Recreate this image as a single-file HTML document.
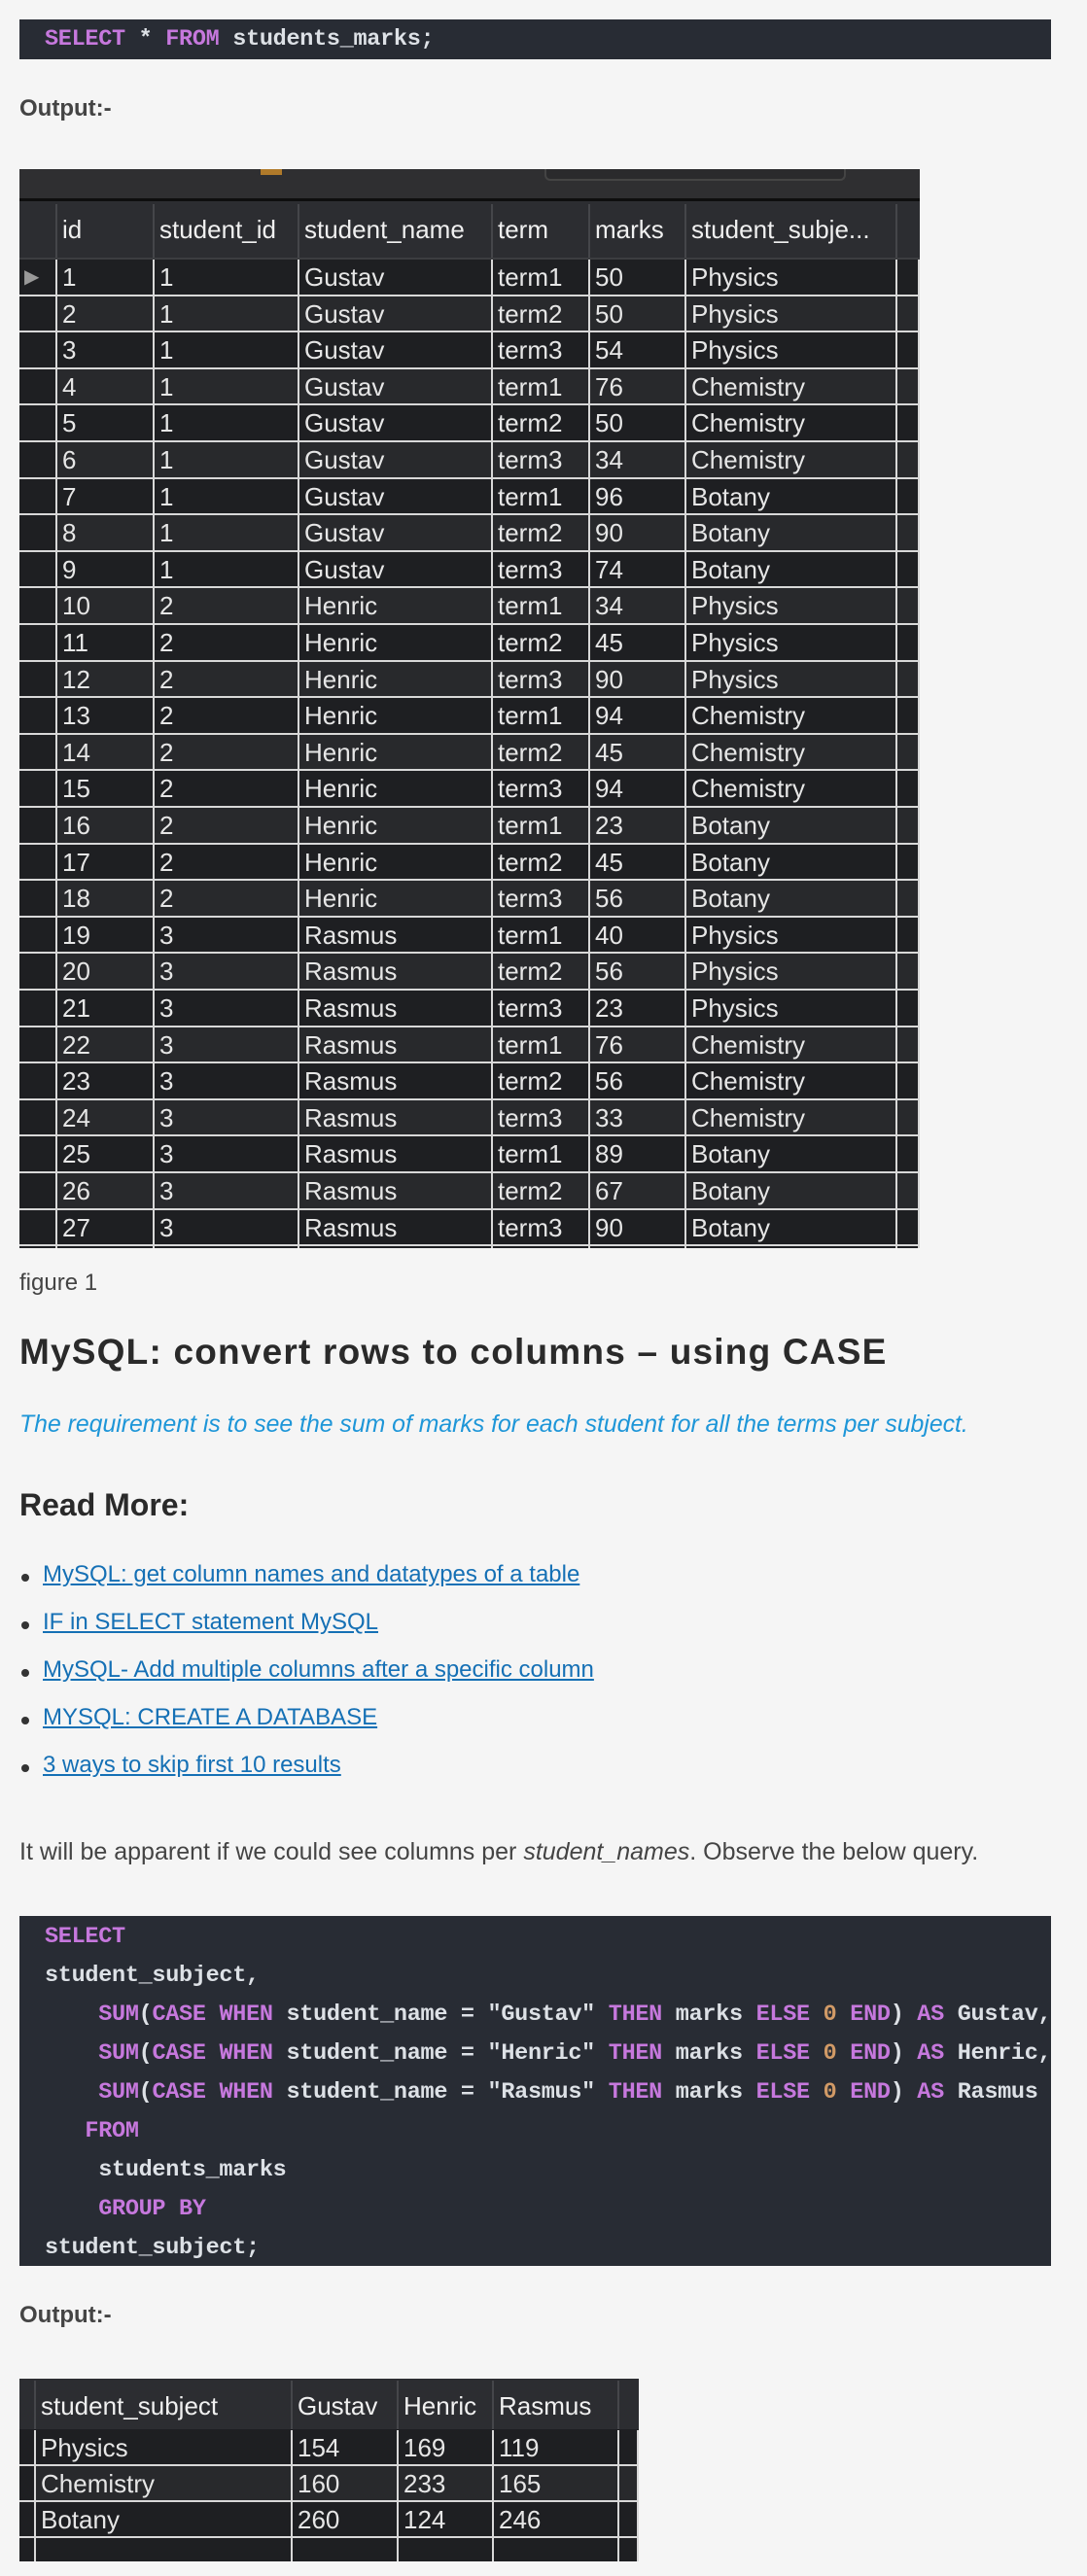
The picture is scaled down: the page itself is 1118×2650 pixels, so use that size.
<!DOCTYPE html>
<html><head><meta charset="utf-8">
<style>
*{margin:0;padding:0;box-sizing:border-box}
body{width:1118px;height:2650px;background:#f5f5f5;position:relative;font-family:"Liberation Sans",sans-serif;color:#3a3a3a;overflow:hidden}
.abs{position:absolute}
.code{position:absolute;left:20px;width:1061px;background:#282c34;font-family:"Liberation Mono",monospace;font-size:23.5px;color:#dde1e6;white-space:pre;padding-left:26px;font-weight:bold;letter-spacing:-0.3px}
.k{color:#c678dd}.n{color:#d19a66}
.tbl{position:absolute;background:#1e1f22;font-family:"Liberation Sans",sans-serif;color:#e6e6e6;font-size:26px;overflow:hidden}
.row{position:absolute;left:0;display:flex}
.row div{height:100%;border-right:2px solid #d8d8d8;padding-left:5px;line-height:36px;white-space:nowrap;overflow:hidden}
.hdr div{border-right:2px solid #45464a;line-height:52px;color:#f0f0f0}
.txt{position:absolute;left:20px;font-size:24px;font-family:"Liberation Sans",sans-serif}
a{color:#1570b5;text-decoration:underline}
ul li{position:absolute;left:20px;font-size:24px;list-style:none}
ul li:before{content:"";position:absolute;left:2px;top:13px;width:8px;height:8px;border-radius:50%;background:#333}
ul li a{margin-left:24px}
</style></head><body>

<div class="code" style="top:20px;height:41px;line-height:41px"><span class="k">SELECT</span> * <span class="k">FROM</span> students_marks;</div>

<div class="txt" style="top:98px;font-weight:bold;font-size:24px;color:#444">Output:-</div>

<div class="tbl" style="left:20px;top:174px;width:926px;height:1110px">
 <div style="position:absolute;left:0;top:0;width:926px;height:30px;background:#2f2f31"></div>
 <div style="position:absolute;left:540px;top:0;width:310px;height:12px;border:2px solid #444;border-top:none;border-radius:0 0 6px 6px;background:#2a2a2c"></div>
 <div style="position:absolute;left:248px;top:0;width:22px;height:6px;background:#b07a2a"></div>
 <div style="position:absolute;left:0;top:30px;width:926px;height:3px;background:#0e0e0e"></div>
 <div class="row hdr" style="top:33px;height:58px;width:926px;background:#2c2d31;padding-top:3px">
  <div style="width:39px"></div><div style="width:100px">id</div><div style="width:149px">student_id</div><div style="width:199px">student_name</div><div style="width:100px">term</div><div style="width:99px">marks</div><div style="width:217px">student_subje...</div><div style="width:23px;border:none"></div>
 </div>
 <div style="position:absolute;left:0;top:91px;width:926px;height:2px;background:#3c3d40"></div>
 <div id="rows"></div>
</div>

<div class="txt" style="top:1306px;font-size:24px;color:#444">figure 1</div>
<div class="abs" style="left:20px;top:1370px;font-size:37px;color:#2a2a2a;font-weight:bold;letter-spacing:1.2px">MySQL: convert rows to columns – using CASE</div>
<div class="txt" style="top:1452px;font-style:italic;color:#1e96d8;font-size:24.8px">The requirement is to see the sum of marks for each student for all the terms per subject.</div>
<div class="abs" style="left:20px;top:1530px;font-size:32px;color:#2a2a2a;font-weight:bold">Read More:</div>
<ul>
<li style="top:1606px"><a>MySQL: get column names and datatypes of a table</a></li>
<li style="top:1655px"><a>IF in SELECT statement MySQL</a></li>
<li style="top:1704px"><a>MySQL- Add multiple columns after a specific column</a></li>
<li style="top:1753px"><a>MYSQL: CREATE A DATABASE</a></li>
<li style="top:1802px"><a>3 ways to skip first 10 results</a></li>
</ul>
<div class="txt" style="top:1891px;font-size:25px;color:#444">It will be apparent if we could see columns per <i>student_names</i>. Observe the below query.</div>

<div class="code" style="top:1971px;height:360px;line-height:40px;padding-top:2px"><span class="k">SELECT</span>
student_subject,
    <span class="k">SUM</span>(<span class="k">CASE</span> <span class="k">WHEN</span> student_name = "Gustav" <span class="k">THEN</span> marks <span class="k">ELSE</span> <span class="n">0</span> <span class="k">END</span>) <span class="k">AS</span> Gustav,
    <span class="k">SUM</span>(<span class="k">CASE</span> <span class="k">WHEN</span> student_name = "Henric" <span class="k">THEN</span> marks <span class="k">ELSE</span> <span class="n">0</span> <span class="k">END</span>) <span class="k">AS</span> Henric,
    <span class="k">SUM</span>(<span class="k">CASE</span> <span class="k">WHEN</span> student_name = "Rasmus" <span class="k">THEN</span> marks <span class="k">ELSE</span> <span class="n">0</span> <span class="k">END</span>) <span class="k">AS</span> Rasmus
   <span class="k">FROM</span>
    students_marks
    <span class="k">GROUP BY</span>
student_subject;</div>

<div class="txt" style="top:2368px;font-weight:bold;font-size:24px;color:#444">Output:-</div>

<div class="tbl" style="left:20px;top:2447px;width:637px;height:188px">
 <div class="row hdr" style="top:0;height:52px;width:637px;background:#2c2d31;padding-top:2px">
  <div style="width:17px"></div><div style="width:264px">student_subject</div><div style="width:109px">Gustav</div><div style="width:98px">Henric</div><div style="width:129px">Rasmus</div><div style="width:20px;border:none"></div>
 </div>
 <div class="row" style="top:53px;height:37px;width:637px;border-bottom:2px solid #d8d8d8"><div style="width:17px;background:#1e1f22"></div><div style="width:264px">Physics</div><div style="width:109px">154</div><div style="width:98px">169</div><div style="width:129px">119</div><div style="width:20px"></div></div>
 <div class="row" style="top:90px;height:37px;width:637px;border-bottom:2px solid #d8d8d8;background:#28292c"><div style="width:17px;background:#1e1f22"></div><div style="width:264px">Chemistry</div><div style="width:109px">160</div><div style="width:98px">233</div><div style="width:129px">165</div><div style="width:20px"></div></div>
 <div class="row" style="top:127px;height:37px;width:637px;border-bottom:2px solid #d8d8d8"><div style="width:17px;background:#1e1f22"></div><div style="width:264px">Botany</div><div style="width:109px">260</div><div style="width:98px">124</div><div style="width:129px">246</div><div style="width:20px"></div></div>
 <div class="row" style="top:164px;height:30px;width:637px"><div style="width:17px"></div><div style="width:264px"></div><div style="width:109px"></div><div style="width:98px"></div><div style="width:129px"></div><div style="width:20px"></div></div>
</div>

<script>
var d=[["Gustav",1,"Physics",[50,50,54]],["Gustav",1,"Chemistry",[76,50,34]],["Gustav",1,"Botany",[96,90,74]],
["Henric",2,"Physics",[34,45,90]],["Henric",2,"Chemistry",[94,45,94]],["Henric",2,"Botany",[23,45,56]],
["Rasmus",3,"Physics",[40,56,23]],["Rasmus",3,"Chemistry",[76,56,33]],["Rasmus",3,"Botany",[89,67,90]]];
var h="",id=1;
d.forEach(function(g){g[3].forEach(function(m,t){
 var top=93+(id-1)*37.6;
 var bg=(id%2==0)?"#28292c":"#1e1f22";
 h+='<div class="row" style="top:'+top+'px;height:37.6px;width:926px;background:'+bg+';border-bottom:2px solid #d8d8d8">'+
 '<div style="width:39px;background:#1e1f22;color:#999;font-size:20px">'+(id==1?'&#9654;':'')+'</div>'+
 '<div style="width:100px">'+id+'</div><div style="width:149px">'+g[1]+'</div><div style="width:199px">'+g[0]+'</div><div style="width:100px">term'+(t+1)+'</div><div style="width:99px">'+m+'</div><div style="width:217px">'+g[2]+'</div><div style="width:23px"></div></div>';
 id++;});});
h+='<div class="row" style="top:'+(93+27*37.6)+'px;height:20px;width:926px"><div style="width:39px"></div><div style="width:100px"></div><div style="width:149px"></div><div style="width:199px"></div><div style="width:100px"></div><div style="width:99px"></div><div style="width:217px"></div><div style="width:23px"></div></div>';
document.getElementById("rows").innerHTML=h;
</script>
</body></html>
